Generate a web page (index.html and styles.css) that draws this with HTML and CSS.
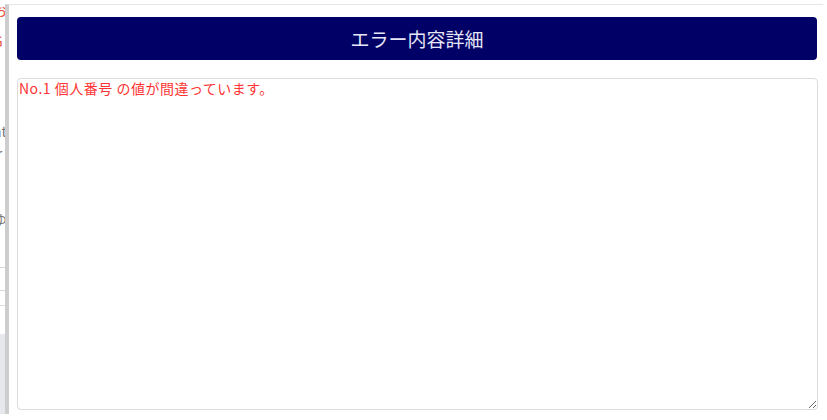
FILE: index.html
```html
<!DOCTYPE html>
<html lang="ja">
<head>
<meta charset="utf-8">
<title>エラー内容詳細</title>
<link rel="stylesheet" href="styles.css">
</head>
<body>
<div class="page">
  <div class="page-col">
    <div class="frag red f1">お</div>
    <div class="frag red f2">G</div>
    <div class="frag gray f3">ht</div>
    <div class="frag gray f4">ir</div>
    <div class="frag gray f5">I</div>
    <div class="frag gray f6">ゆ</div>
    <div class="frag gray f7">/</div>
    <div class="frag-box"></div>
    <div class="frag-line"></div>
    <div class="frag-band"></div>
  </div>
</div>
<div class="modal">
  <div class="modal-head">エラー内容詳細</div>
  <textarea class="modal-body" readonly>No.1 個人番号 の値が間違っています。</textarea>
</div>
</body>
</html>
```

FILE: styles.css
```css
html, body {
  margin: 0;
  padding: 0;
  background: #ffffff;
  width: 827px;
  height: 420px;
  overflow: hidden;
  font-family: "Noto Sans CJK JP", "Noto Sans", sans-serif;
}

.page {
  width: 827px;
  height: 420px;
}

.page-col {
  width: 5px;
  height: 414px;
  overflow: hidden;
  display: flex;
  flex-direction: column;
}

.page-col > div {
  flex: none;
  width: 30px;
  margin-left: -7px;
}

.frag {
  font-size: 14px;
  line-height: 16px;
  height: 16px;
}

.red { color: #e84a3a; }
.gray { color: #777777; }

.f1 { margin-top: 2px; }
.f2 { margin-top: 15px; }
.f3 { margin-top: 74px; }
.f4 { margin-top: 6px; }
.f5 { margin-top: 8px; }
.f6 { margin-top: 26px; }
.f7 { margin-top: 14px; }

.frag-box {
  margin-top: 10px;
  height: 22px;
  border: 1px solid #d8d8d8;
  border-radius: 3px;
}

.frag-line {
  margin-top: 14px;
  height: 1px;
  background: #dddddd;
}

.frag-band {
  margin-top: 28px;
  height: 82px;
  background: #e6e8ee;
}

.modal {
  position: absolute;
  left: 5px;
  top: 4px;
  width: 818px;
  height: 410px;
  background: #ffffff;
  border-left: 4px solid #cdcdcd;
  border-top: 1px solid #e6e6e6;
  padding: 12px 4px 4px 8px;
  display: flex;
  flex-direction: column;
  gap: 18px;
  box-sizing: border-box;
}

.modal-head {
  height: 43px;
  flex: none;
  background: #000066;
  border-radius: 4px;
  color: #e6e6f6;
  font-size: 19px;
  display: flex;
  align-items: center;
  justify-content: center;
  width: 800px;
}

.modal-body {
  flex: none;
  width: 801px;
  height: 332px;
  box-sizing: border-box;
  border: 1px solid #dcdcdc;
  border-radius: 4px;
  padding: 0 1px;
  margin: 0;
  color: #ff3434;
  font-family: "Noto Sans CJK JP", "Noto Sans", sans-serif;
  font-size: 14px;
  letter-spacing: 0.5px;
  line-height: 19px;
  resize: both;
  outline: none;
  background: #ffffff;
}
```
